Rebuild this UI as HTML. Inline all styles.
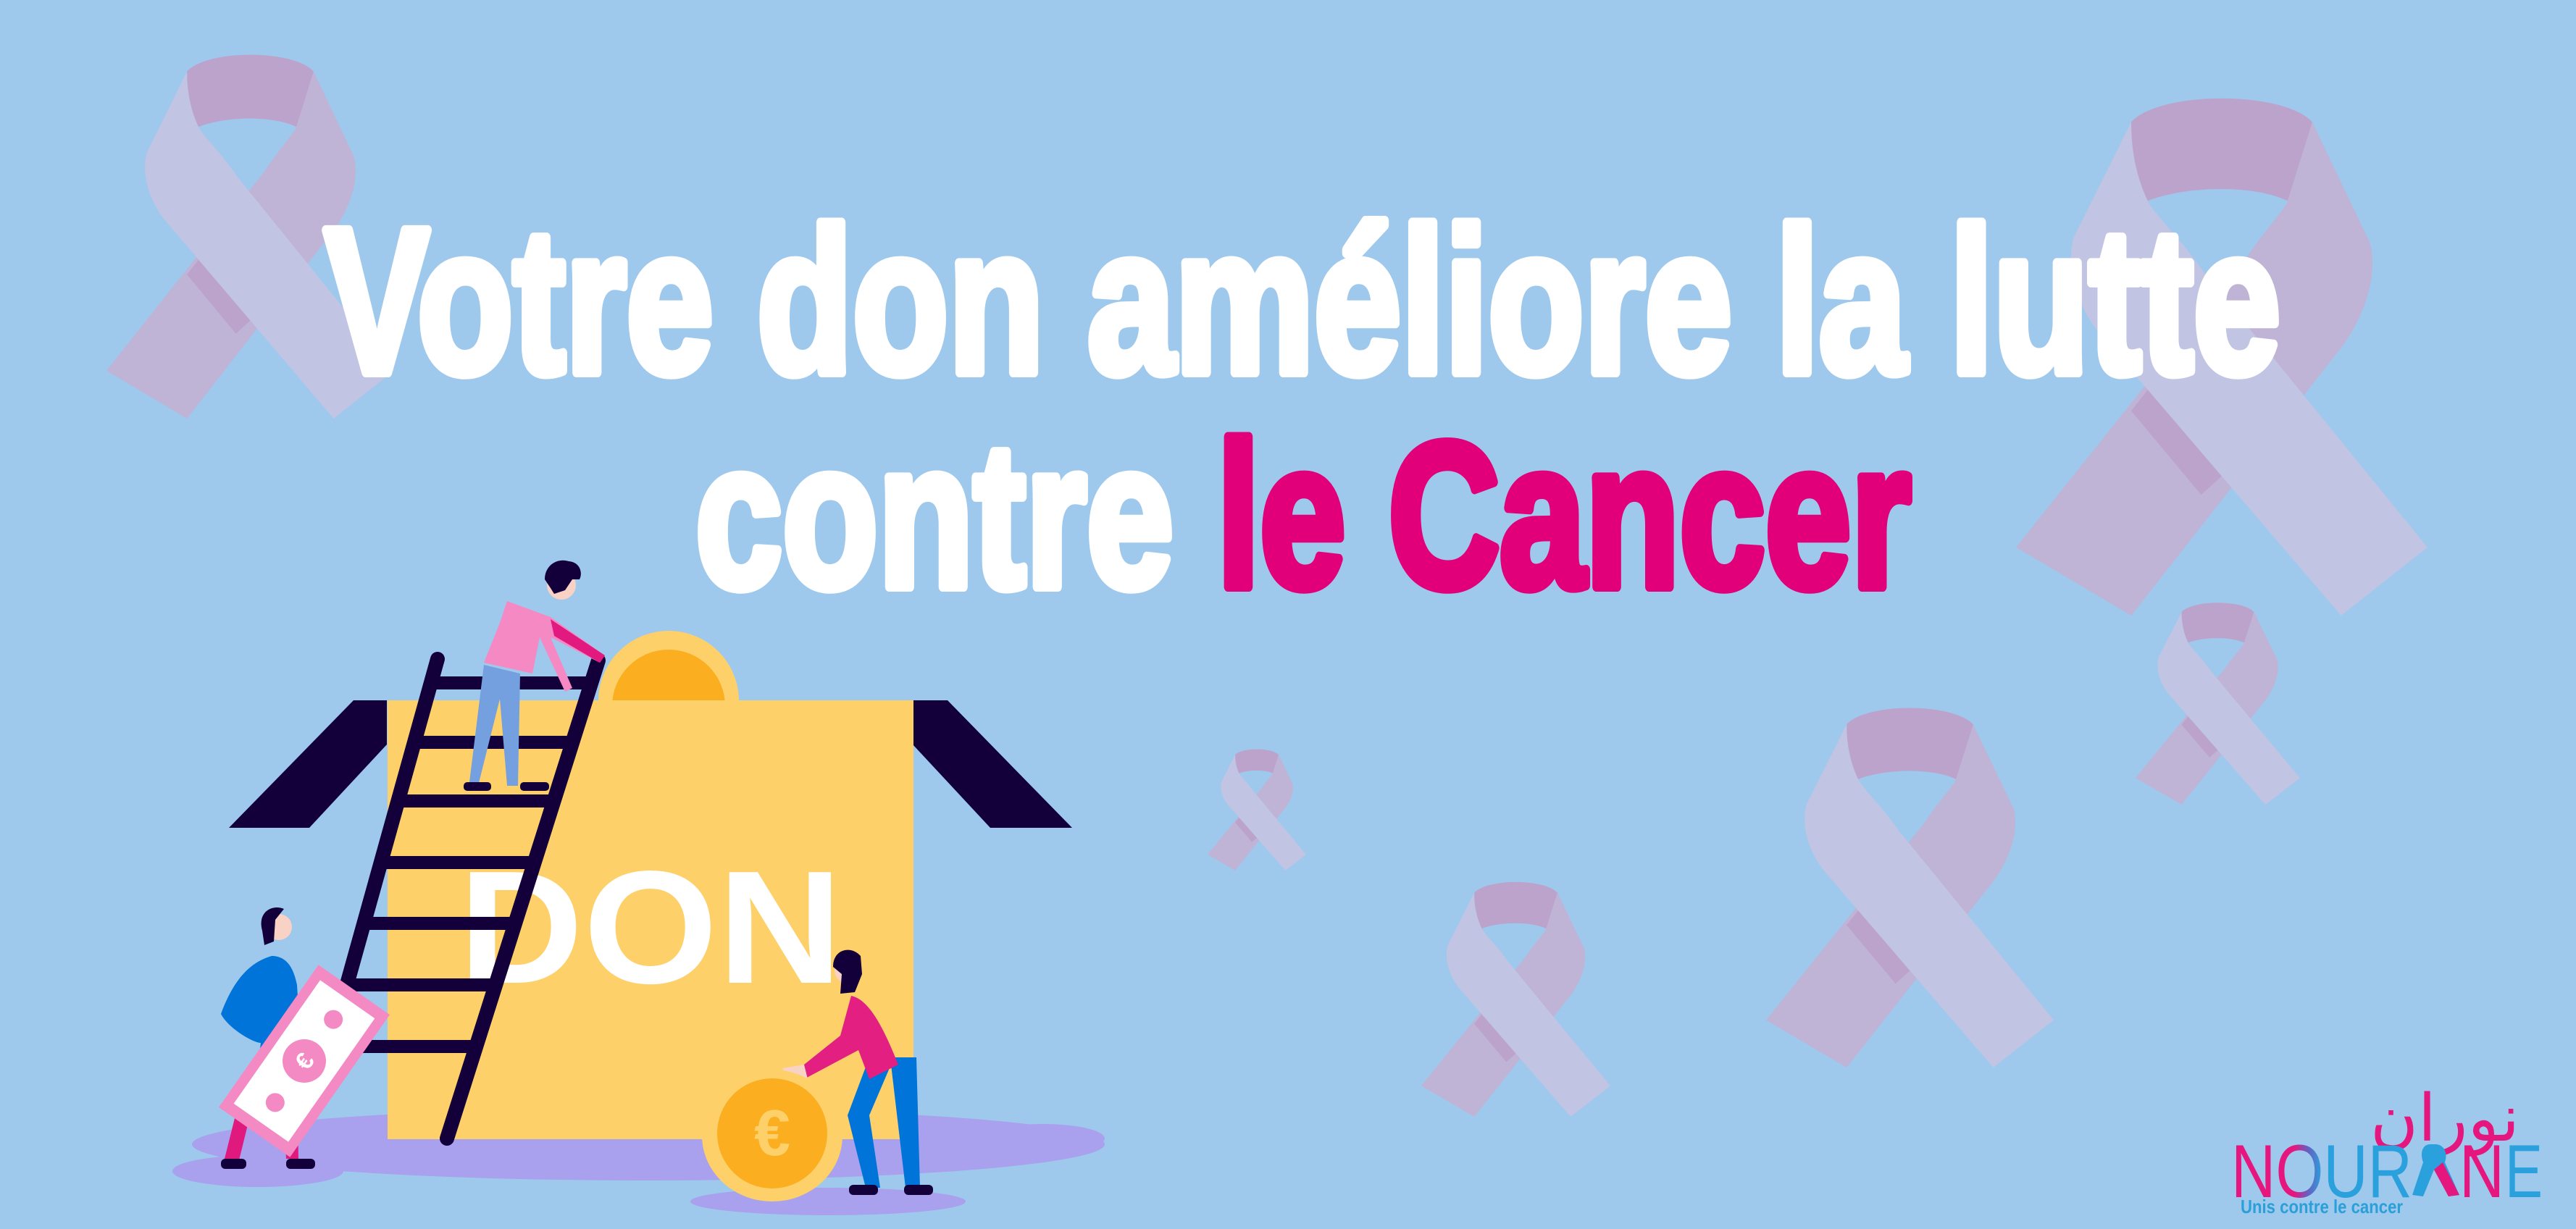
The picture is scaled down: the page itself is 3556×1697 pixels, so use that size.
<!DOCTYPE html>
<html><head><meta charset="utf-8"><style>
html,body{margin:0;padding:0;}
body{width:3556px;height:1697px;overflow:hidden;background:#9ec9ec;}
svg{display:block;}
</style></head><body>
<svg width="3556" height="1697" viewBox="0 0 3556 1697" xmlns="http://www.w3.org/2000/svg">
<defs>
<g id="rib">
<path d="M28,6 C35,0 65,0 72,6 L72,11 C70,17 67,20 66,21 C58,18 42,18 32,21 C30,18 28,14 28,11 Z" fill="#bca3cc"/>
<path d="M72,6 L86,29 C88,35 85,42 80,48 L28,100 L0,87 L55,33 C60,27 66,22 66,21 Z" fill="#bfb3d6"/>
<path d="M28,61 L32,57 L52,72 L45,77 Z" fill="#bca3cc"/>
<path d="M28,6 L14,28 C12,34 15,41 20,46 L79,100 L100,87 L46,35 C40,28 34,24 32,21 C29,16 28,11 28,6 Z" fill="#c1c4e2"/>
</g>
<linearGradient id="lg1" x1="0" x2="1"><stop offset="0" stop-color="#e5177f"/><stop offset="0.35" stop-color="#e5177f"/><stop offset="0.42" stop-color="#6a5bc0"/><stop offset="0.5" stop-color="#2aa0dc"/><stop offset="1" stop-color="#2aa0dc"/></linearGradient>
</defs>

<svg x="147" y="68" width="397" height="510" viewBox="0 0 100 100" preserveAspectRatio="none"><use href="#rib"/></svg>
<svg x="2783" y="125" width="568" height="725" viewBox="0 0 100 100" preserveAspectRatio="none"><use href="#rib"/></svg>
<svg x="2948" y="828" width="227" height="283" viewBox="0 0 100 100" preserveAspectRatio="none"><use href="#rib"/></svg>
<svg x="1667" y="1032" width="136" height="170" viewBox="0 0 100 100" preserveAspectRatio="none"><use href="#rib"/></svg>
<svg x="1962" y="1213" width="261" height="329" viewBox="0 0 100 100" preserveAspectRatio="none"><use href="#rib"/></svg>
<svg x="2438" y="970" width="397" height="504" viewBox="0 0 100 100" preserveAspectRatio="none"><use href="#rib"/></svg>

<g font-family="Liberation Sans Narrow, Liberation Sans, sans-serif" font-weight="bold" font-size="285" stroke-width="14" stroke-linejoin="round">
<text x="448" y="514" fill="#fff" stroke="#fff" textLength="2700" lengthAdjust="spacingAndGlyphs">Votre don améliore la lutte</text>
<text x="960" y="810" fill="#fff" stroke="#fff" textLength="660" lengthAdjust="spacingAndGlyphs">contre</text>
<text x="1680" y="810" fill="#e2007a" stroke="#e2007a" textLength="958" lengthAdjust="spacingAndGlyphs">le Cancer</text>
</g>

<ellipse cx="895" cy="1580" rx="630" ry="50" fill="#a9a0ee"/>
<ellipse cx="356" cy="1617" rx="118" ry="22" fill="#a9a0ee"/>
<ellipse cx="1143" cy="1659" rx="190" ry="19" fill="#a9a0ee"/>
<ellipse cx="1440" cy="1572" rx="85" ry="20" fill="#a9a0ee"/>

<circle cx="923" cy="968" r="97" fill="#fdd06a"/>
<circle cx="923" cy="975" r="78" fill="#fbae1f"/>
<polygon points="316,1143 488,967 534,967 534,1028 427,1143" fill="#13003a"/>
<polygon points="1260,967 1308,967 1480,1143 1367,1143 1260,1028" fill="#13003a"/>
<rect x="535" y="967" width="726" height="606" fill="#fdd06a"/>
<text x="633" y="1357" font-family="Liberation Sans, sans-serif" font-weight="bold" font-size="222" fill="#fff" textLength="530" lengthAdjust="spacingAndGlyphs">DON</text>

<g stroke="#13003a" stroke-width="20" stroke-linecap="round">
<line x1="604" y1="910" x2="455" y2="1445"/>
<line x1="826" y1="912" x2="617" y2="1572"/>
</g>
<g stroke="#13003a" stroke-width="18">
<line x1="594" y1="943" x2="815" y2="943"/>
<line x1="571" y1="1025" x2="790" y2="1025"/>
<line x1="549" y1="1106" x2="764" y2="1106"/>
<line x1="525" y1="1191" x2="737" y2="1191"/>
<line x1="501" y1="1275" x2="711" y2="1275"/>
<line x1="478" y1="1360" x2="684" y2="1360"/>
<line x1="455" y1="1445" x2="657" y2="1445"/>
</g>

<path d="M668,918 L648,1080 L660,1085 L690,965 L700,1085 L715,1085 L718,930 Z" fill="#75a0e0"/>
<rect x="640" y="1080" width="38" height="12" rx="5" fill="#13003a"/>
<rect x="718" y="1080" width="40" height="12" rx="5" fill="#13003a"/>
<path d="M700,830 L760,852 L835,905 L828,915 L760,880 L790,950 L780,955 L745,880 L735,930 L668,915 L690,860 Z" fill="#f589c4"/>
<path d="M760,855 L835,905 L828,915 L765,878 Z" fill="#e2197f"/>
<circle cx="775" cy="808" r="20" fill="#f8d2c4"/>
<path d="M752,800 C752,780 770,770 785,775 C800,776 805,790 800,800 L790,800 L780,815 L765,820 L760,812 Z" fill="#13003a"/>

<path d="M335,1500 L310,1600 L330,1602 L355,1500 Z" fill="#e0197e"/>
<path d="M390,1500 L395,1600 L412,1600 L410,1500 Z" fill="#e0197e"/>
<path d="M375,1320 C340,1330 320,1360 305,1400 C315,1420 350,1440 360,1440 L350,1520 L420,1520 L410,1360 C405,1335 395,1320 375,1320 Z" fill="#0074d9"/>
<rect x="305" y="1600" width="35" height="14" rx="6" fill="#13003a"/>
<rect x="395" y="1600" width="40" height="14" rx="6" fill="#13003a"/>
<circle cx="385" cy="1280" r="18" fill="#f8d2c4"/>
<path d="M362,1285 C355,1260 375,1248 392,1255 L380,1270 L378,1300 L365,1305 Z" fill="#13003a"/>
<g transform="translate(420,1465) rotate(-55)">
<rect x="-120" y="-60" width="240" height="120" fill="#f48ac4"/>
<rect x="-104" y="-46" width="208" height="92" fill="#fff"/>
<circle cx="0" cy="0" r="30" fill="#f48ac4"/>
<text x="0" y="12" text-anchor="middle" font-family="Liberation Sans, sans-serif" font-weight="bold" font-size="34" fill="#fff">€</text>
<circle cx="-70" cy="0" r="13" fill="#f48ac4"/>
<circle cx="70" cy="0" r="13" fill="#f48ac4"/>
</g>

<path d="M1200,1460 L1170,1540 L1195,1640 L1215,1640 L1200,1540 L1230,1470 L1250,1640 L1270,1640 L1265,1460 Z" fill="#0074d9"/>
<path d="M1175,1375 C1200,1380 1220,1420 1240,1470 L1200,1490 L1185,1450 L1110,1490 L1100,1478 L1160,1430 Z" fill="#e31f82"/>
<rect x="1172" y="1636" width="40" height="14" rx="6" fill="#13003a"/>
<rect x="1248" y="1636" width="40" height="14" rx="6" fill="#13003a"/>
<circle cx="1170" cy="1340" r="18" fill="#f8d2c4"/>
<path d="M1150,1335 C1150,1310 1175,1305 1188,1320 L1190,1345 L1180,1370 L1160,1372 L1162,1345 Z" fill="#13003a"/>
<path d="M1080,1475 L1110,1470 L1115,1490 L1090,1490 Z" fill="#f8d2c4"/>
<ellipse cx="1066" cy="1568" rx="97" ry="91" fill="#fdd06a"/>
<ellipse cx="1066" cy="1565" rx="76" ry="76" fill="#fbae1f"/>
<text x="1066" y="1595" text-anchor="middle" font-family="Liberation Sans, sans-serif" font-weight="bold" font-size="90" fill="#fdd06a">€</text>

<text x="3375" y="1575" text-anchor="middle" font-family="DejaVu Sans, sans-serif" font-size="90" fill="#e5177f">نوران</text>
<text x="3080" y="1653" font-family="Liberation Sans, sans-serif" font-size="104" fill="url(#lg1)" textLength="250" lengthAdjust="spacingAndGlyphs">NOUR</text>
<path d="M3355,1580 C3345,1580 3340,1590 3345,1605 L3330,1650 L3345,1652 L3360,1615 L3380,1652 L3395,1650 L3375,1605 C3380,1590 3372,1580 3362,1580 Z" fill="#2aa0dc"/>
<path d="M3360,1615 L3380,1652 L3395,1650 L3372,1605 Z" fill="#e5177f"/>
<text x="3395" y="1653" font-family="Liberation Sans, sans-serif" font-size="104" fill="#e5177f" textLength="62" lengthAdjust="spacingAndGlyphs">N</text>
<text x="3458" y="1653" font-family="Liberation Sans, sans-serif" font-size="104" fill="#2aa0dc" textLength="52" lengthAdjust="spacingAndGlyphs">E</text>
<text x="3093" y="1675" font-family="Liberation Sans, sans-serif" font-weight="bold" font-size="26" fill="#2a9fd8" textLength="224" lengthAdjust="spacingAndGlyphs">Unis contre le cancer</text>
</svg>
</body></html>
